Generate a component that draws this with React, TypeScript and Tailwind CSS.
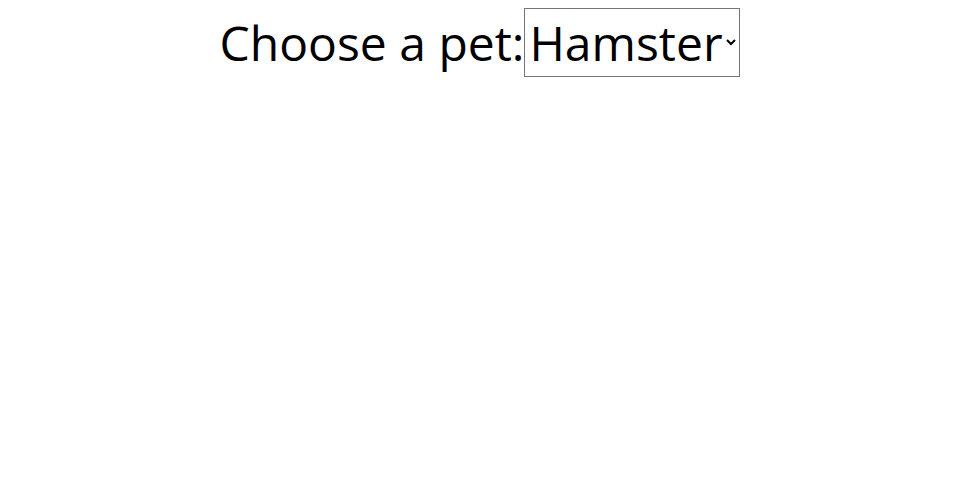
import { useState } from 'react';

export default function App() {
  const [pet, setPet] = useState('hamster');

  return (
    <div className="min-h-[500px] bg-white pt-2 text-center text-black font-['Open_Sans',sans-serif] text-5xl">
      <label htmlFor="pet-select">Choose a pet:</label>
      <select
        id="pet-select"
        value={pet}
        onChange={(e) => setPet(e.target.value)}
        className="border border-[#767676] text-5xl"
      >
        <option value="dog">Dog</option>
        <option value="cat">Cat</option>
        <option value="hamster">Hamster</option>
        <option value="parrot">Parrot</option>
        <option value="spider">Spider</option>
      </select>
    </div>
  );
}
